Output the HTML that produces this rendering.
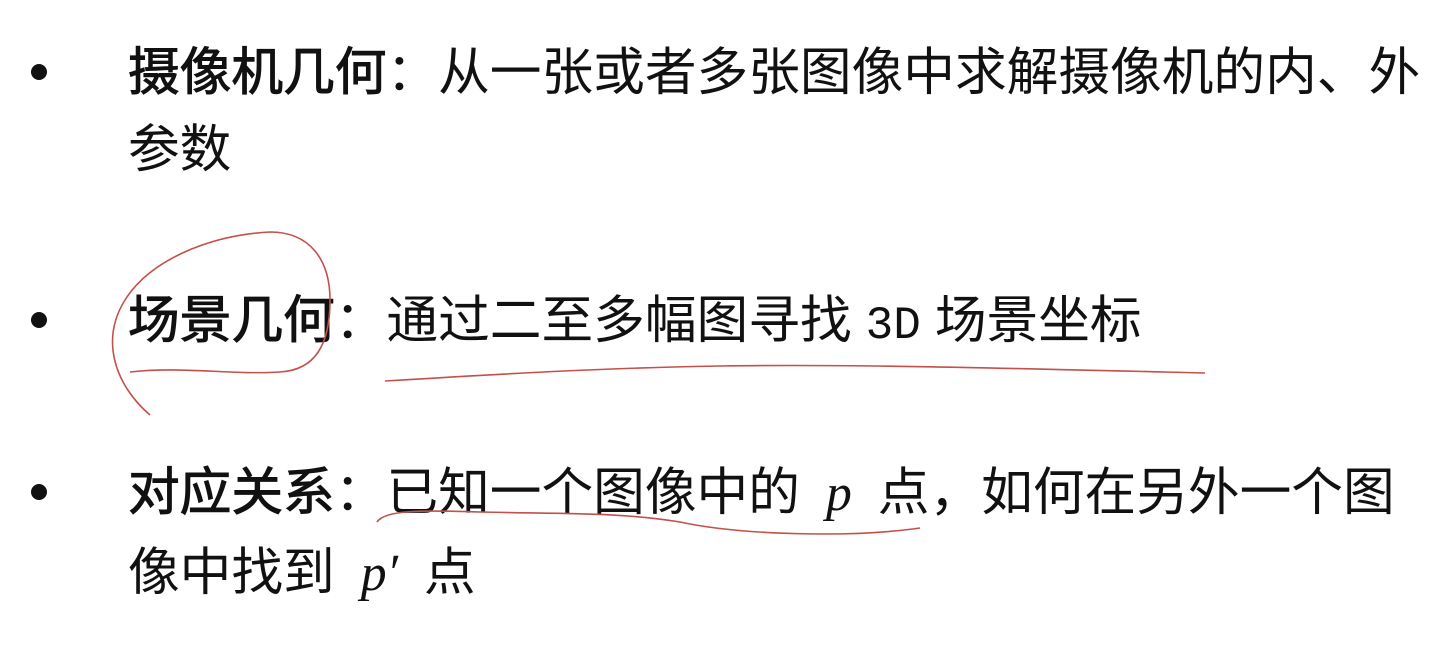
<!DOCTYPE html>
<html><head><meta charset="utf-8"><style>
html,body{margin:0;padding:0;background:#fff;width:1442px;height:650px;overflow:hidden;position:relative}
.t{position:absolute;left:128px;font-family:"WenQuanYi Zen Hei","Noto Sans CJK SC",sans-serif;font-size:51.7px;line-height:78px;color:#111;white-space:nowrap}
.b{-webkit-text-stroke:1px #111}
.d{position:absolute;left:31px;width:16px;height:16px;border-radius:50%;background:#111}
.m{font-family:"Liberation Serif",serif;font-style:italic;padding:0 26px}
.mono{font-family:"Liberation Mono",monospace;font-size:46px;padding:0 14px}
</style></head><body>
<div class="d" style="top:64px"></div>
<div class="t" style="top:29px"><span class="b">摄像机几何</span>：从一张或者多张图像中求解摄像机的内、外</div>
<div class="t" style="top:106px">参数</div>
<div class="d" style="top:312px"></div>
<div class="t" style="top:277px"><span class="b">场景几何</span>：通过二至多幅图寻找<span class="mono">3D</span>场景坐标</div>
<div class="d" style="top:484px"></div>
<div class="t" style="top:449px"><span class="b">对应关系</span>：已知一个图像中的<span class="m">p</span>点，如何在另外一个图</div>
<div class="t" style="top:529px">像中找到<span class="m">p′</span>点</div>
<svg width="1442" height="650" style="position:absolute;left:0;top:0" fill="none" stroke="#c4504a" stroke-width="1.6">
<path d="M150 415 C115 385 100 340 125 300 C150 260 210 235 270 232 C310 232 330 260 330 300 C330 345 315 370 280 372 C230 375 180 366 130 372"/>
<path d="M385 381 C500 374 600 368 720 366 C850 364 1000 368 1205 373"/>
<path d="M377 522 C385 510 420 510 480 512 C560 514 620 512 680 522 C740 535 850 538 920 528"/>
</svg>
</body></html>
